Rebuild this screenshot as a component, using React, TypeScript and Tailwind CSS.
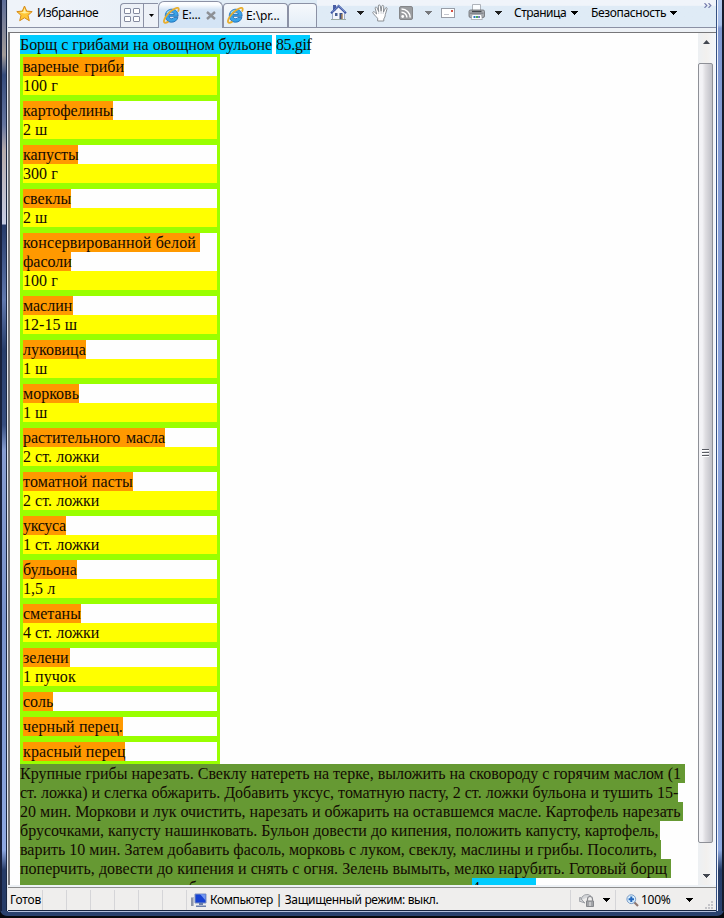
import type { ReactNode } from 'react';

type Ingredient = { lines: { text: string; box: string }[]; amount?: string };

const ingredients: Ingredient[] = [
  { lines: [{ text: 'вареные гриби', box: 'w-[101px]' }], amount: '100 г' },
  { lines: [{ text: 'картофелины', box: 'w-[90px]' }], amount: '2 ш' },
  { lines: [{ text: 'капусты', box: 'w-[55px]' }], amount: '300 г' },
  { lines: [{ text: 'свеклы', box: 'w-[48px]' }], amount: '2 ш' },
  {
    lines: [
      { text: 'консервированной белой', box: 'w-[177px] pr-1 tracking-[0.15px]' },
      { text: 'фасоли', box: 'w-[48px]' },
    ],
    amount: '100 г',
  },
  { lines: [{ text: 'маслин', box: 'w-[50px]' }], amount: '12-15 ш' },
  { lines: [{ text: 'луковица', box: 'w-[63px]' }], amount: '1 ш' },
  { lines: [{ text: 'морковь', box: 'w-[56px]' }], amount: '1 ш' },
  { lines: [{ text: 'растительного масла', box: 'w-[142px] tracking-[-0.05px]' }], amount: '2 ст. ложки' },
  { lines: [{ text: 'томатной пасты', box: 'w-[110px] tracking-[0.15px]' }], amount: '2 ст. ложки' },
  { lines: [{ text: 'уксуса', box: 'w-[43px] tracking-[-0.3px]' }], amount: '1 ст. ложки' },
  { lines: [{ text: 'бульона', box: 'w-[54px]' }], amount: '1,5 л' },
  { lines: [{ text: 'сметаны', box: 'w-[58px]' }], amount: '4 ст. ложки' },
  { lines: [{ text: 'зелени', box: 'w-[47px]' }], amount: '1 пучок' },
  { lines: [{ text: 'соль', box: 'w-[30px]' }] },
  { lines: [{ text: 'черный перец.', box: 'w-[100px] tracking-[0.12px]' }] },
  { lines: [{ text: 'красный перец', box: 'w-[102px] tracking-[0.12px]' }] },
];

const steps = [
  { text: 'Крупные грибы нарезать. Свеклу натереть на терке, выложить на сковороду с горячим маслом (1', box: 'w-[665px] pr-[4px]' },
  { text: 'ст. ложка) и слегка обжарить. Добавить уксус, томатную пасту, 2 ст. ложки бульона и тушить 15-', box: 'w-[658px]' },
  { text: '20 мин. Моркови и лук очистить, нарезать и обжарить на оставшемся масле. Картофель нарезать', box: 'w-[663px] pr-[4px]' },
  { text: 'брусочками, капусту нашинковать. Бульон довести до кипения, положить капусту, картофель,', box: 'w-[640px] pr-[4px]' },
  { text: 'варить 10 мин. Затем добавить фасоль, морковь с луком, свеклу, маслины и грибы. Посолить,', box: 'w-[641px] pr-[4px]' },
  { text: 'поперчить, довести до кипения и снять с огня. Зелень вымыть, мелко нарубить. Готовый борщ', box: 'w-[651px] pr-[4px]' },
];

function Caret({ className = '' }: { className?: string }) {
  return (
    <svg className={`shrink-0 ${className}`} width="7" height="4" viewBox="0 0 7 4" shapeRendering="crispEdges">
      <path d="M0 0h7L3.5 4z" fill="currentColor" />
    </svg>
  );
}

function ExplorerIcon() {
  return (
    <svg width="17" height="17" viewBox="0 0 17 17" className="shrink-0">
      <path d="M14.900 10.400h-4c-.5.900-1.200 1.300-2.200 1.300-1.500 0-2.500-.9-2.600-2.400h9C15.300 5 12.700 2.200 8.900 2.200 5.100 2.200 2.300 5 2.300 8.700c0 3.900 2.700 6.500 6.300 6.500 3.200 0 5.400-1.800 6.300-4.800zM6.100 7.300c.2-1.300 1.200-2.100 2.600-2.100s2.400.8 2.500 2.100z" fill="#3aa3e6" stroke="#1766ae" strokeWidth=".8" />
      <path d="M4 6.300C4.600 4.500 6.700 3.500 9 3.500" fill="none" stroke="#a5e2fa" strokeWidth="1.200" />
      <path d="M15 4.600C16.700 1 15.200-.3 11.100 2 6.300 4.600 1.600 10.100 1 13.700c-.4 2.600 1.400 2.600 4.500.9" fill="none" stroke="#e8ae2d" strokeWidth="1.800" />
    </svg>
  );
}

function HomeIcon() {
  return (
    <svg width="17" height="17" viewBox="0 0 17 17" className="shrink-0">
      <path d="M2.500 8v7.500h12V8l-6-5z" fill="#f3f5fb" stroke="#8b99bb" strokeWidth=".8" />
      <path d="M3 1h3v5L3 8z" fill="#4a5da4" />
      <path d="M1 9.200 8.600 2 16 9.200" fill="none" stroke="#3d55a5" strokeWidth="2" />
      <path d="M2 8.200 8.600 1.700 15 8" fill="none" stroke="#94abd9" strokeWidth=".7" />
      <path d="M5 9h2.500v3H5z" fill="#465d91" />
      <path d="M9.500 9h3v6.500h-3z" fill="#3c5186" />
      <path d="M11.500 10h1v5h-1z" fill="#d89b45" />
      <path d="M1 15.500h15" stroke="#9aa9a2" />
    </svg>
  );
}

function HandIcon() {
  return (
    <svg width="18" height="18" viewBox="0 0 18 18" className="shrink-0">
      <path d="M5.600 14.300C3.500 12 1.500 10 .8 8.800c-.4-.9.800-1.500 1.600-.8l2.300 2L3.200 4.200c-.2-1.300 1.300-1.600 1.800-.5l1.700 4L6.300 2c0-1.400 1.700-1.500 2-.1l.8 5.400.7-5.100c.3-1.300 1.900-1.100 1.900.3l-.2 5.600 1.900-4c.6-1.100 2-.6 1.600.8l-1.700 5.600c-.1 2-.7 3.300-1.500 4.400v2.100H5.700z" fill="#fff" stroke="#7f8389" strokeWidth=".9" />
      <path d="M6.700 8v2M9.100 7.500v2.300M11.400 8l-.3 2" stroke="#b3b8c0" strokeWidth=".7" />
    </svg>
  );
}

function FeedIcon() {
  return (
    <svg width="14" height="14" viewBox="0 0 14 14" className="shrink-0">
      <rect x=".5" y=".5" width="13" height="13" rx="1.500" fill="#9b9da0" stroke="#85878a" />
      <circle cx="3.700" cy="10.500" r="1.400" fill="#fff" />
      <path d="M2.500 6.200a5.400 5.400 0 0 1 5.400 5.400M2.500 2.900a8.700 8.700 0 0 1 8.700 8.700" fill="none" stroke="#fff" strokeWidth="1.500" />
    </svg>
  );
}

function PrinterIcon() {
  return (
    <svg width="17" height="17" viewBox="0 0 17 17" className="shrink-0">
      <path d="M4.500.5h8V7h-8z" fill="#fbfdff" stroke="#aeb3ba" />
      <rect x="1" y="6" width="15.500" height="7.500" rx="1.500" fill="#a9acb0" stroke="#686b70" strokeWidth=".8" />
      <path d="M4 7.500h9.500" stroke="#45484d" strokeWidth="1.300" />
      <path d="M2 9.200h13.500" stroke="#75787d" />
      <path d="M4 10.500h9.500l.8 5H3.200z" fill="#fff" stroke="#9499a0" strokeWidth=".7" />
      <path d="M5.500 12h2v2h-2z" fill="#2772c2" /><path d="M8 12h2v2H8z" fill="#47a95a" /><path d="M10.300 12h1.500v2h-1.500z" fill="#4559ad" />
    </svg>
  );
}

function Toolbar() {
  return (
    <header className="flex h-7 shrink-0 border-b border-[#8b91a5] bg-linear-to-r from-[#eff3f9] from-5% to-[#deebf6] to-40% text-[12px] leading-4 text-black">
      <div className="flex w-28 items-center pb-px pl-2">
        <svg width="17" height="17" viewBox="0 0 17 17" className="shrink-0">
          <path d="m8.500 1 2.200 5.100 5.500.5-4.200 3.700 1.300 5.400-4.800-2.900-4.800 2.900L5 10.300.8 6.600l5.500-.5z" fill="#ffc636" stroke="#d78b18" />
          <path d="m8.500 3 1.300 4 4 .5-5.300 1-5-1L7.200 7z" fill="#fff0a1" />
        </svg>
        <span className="ml-1 whitespace-nowrap tracking-[-0.35px]">Избранное</span>
      </div>
      <div className="mt-[3px] flex h-6 w-[38px] rounded-tl-sm border-l border-t border-[#8b91a5] bg-[#edf1f7]">
        <div className="flex w-[23px] items-center justify-center border-r border-[#8b91a5] pb-px">
          <div className="grid grid-cols-2 gap-[2px]">
            <i className="h-[6px] w-[7px] rounded-[1px] border border-[#858ba0] bg-white" />
            <i className="h-[6px] w-[7px] rounded-[1px] border border-[#858ba0] bg-white" />
            <i className="h-[6px] w-[7px] rounded-[1px] border border-[#858ba0] bg-white" />
            <i className="h-[6px] w-[7px] rounded-[1px] border border-[#858ba0] bg-white" />
          </div>
        </div>
        <div className="flex flex-1 items-center justify-center pb-px">
          <svg width="5" height="3" viewBox="0 0 5 3" className="shrink-0"><path d="M0 0h5L2.500 3z" /></svg>
        </div>
      </div>
      <div className="mt-px flex h-[27px] w-[65px] items-center rounded-t-md border border-b-0 border-[#8b91a5] bg-linear-to-b from-[#fbfdff] from-10% to-[#d4e4f5] to-30% pl-1">
        <ExplorerIcon />
        <span className="ml-[2px] w-[19px] tracking-[-0.2px]">E:...</span>
        <svg width="10" height="9" viewBox="0 0 10 9" className="ml-[5px]"><path d="m1 1 8 7M9 1 1 8" stroke="#8d9095" strokeWidth="2.400" /></svg>
      </div>
      <div className="mt-[3px] flex h-6 w-[65px] items-center rounded-t-sm border border-b-0 border-[#8b91a5] bg-linear-to-b from-[#f6f9fc] to-[#e3edf7] pl-[3px]">
        <ExplorerIcon />
        <span className="ml-[2px] whitespace-nowrap tracking-[-0.1px]">E:\pr...</span>
      </div>
      <div className="mt-[3px] h-6 w-[29px] rounded-t-sm border border-b-0 border-[#8b91a5] bg-linear-to-b from-[#f6f9fc] to-[#e3edf7]" />
      <div className="flex flex-1 items-center bg-linear-to-b from-[#f0f4fa] from-20% to-[#dfebf6] to-22% pb-[2px] pl-[13px]">
        <HomeIcon /><Caret className="ml-[10px] text-[#202020]" />
        <span className="ml-[8px] flex"><HandIcon /></span>
        <span className="ml-[9px] flex"><FeedIcon /></span><Caret className="ml-[12px] text-[#77797d]" />
        <svg width="14" height="10" viewBox="0 0 14 10" className="ml-[9px] shrink-0"><rect x=".5" y=".5" width="13" height="9" fill="#fff" stroke="#989da7" /><path d="M10 2h2v2h-2z" fill="#d65144" /><path d="M3 6.500h5" stroke="#c3c6ce" /></svg>
        <span className="ml-[13px] flex"><PrinterIcon /></span><Caret className="ml-[10px] text-[#202020]" />
        <span className="ml-[12px] w-[53px] whitespace-nowrap tracking-[-0.5px]">Страница</span><Caret className="ml-1" />
        <span className="ml-[13px] w-[75px] whitespace-nowrap tracking-[-0.35px]">Безопасность</span><Caret className="ml-1" />
        <svg width="8" height="5" viewBox="0 0 8 5" className="mb-[15px] ml-[27px] shrink-0"><path d="m.5.200 2.300 2.300L.5 4.800M4.500.200l2.300 2.300-2.300 2.300" fill="none" stroke="#747bab" strokeWidth="1.200" /></svg>
      </div>
    </header>
  );
}

function Mark({ box, children, color }: { box: string; children: ReactNode; color: string }) {
  return <div className={`h-[19px] whitespace-nowrap text-justify [text-align-last:justify] ${box} ${color}`}>{children}</div>;
}

function RecipePage() {
  return (
    <main className="h-[852px] w-[688px] overflow-hidden bg-[#fefefe] pl-[10px] pt-[2px] font-['Liberation_Serif','Times_New_Roman',serif] text-[16px] leading-[19px] text-[#130b02]">
      <div className="flex gap-1">
        <Mark box="w-[252px] tracking-[-0.04px]" color="bg-[#00ccff]">Борщ с грибами на овощном бульоне</Mark>
        <Mark box="w-[34px] tracking-[-0.4px]" color="bg-[#00ccff]">85.gif</Mark>
      </div>
      <ul className="w-[200px]">
        {ingredients.map((item) => (
          <li key={item.lines[0].text} className="border-[3px] border-[#99ff00] bg-[#fefefe]">
            {item.lines.map((line) => (
              <Mark key={line.text} box={line.box} color="bg-[#ff9900]">{line.text}</Mark>
            ))}
            {item.amount && <div className="h-[19px] bg-[#ffff00] tracking-[0.05px]">{item.amount}</div>}
          </li>
        ))}
      </ul>
      {steps.map((line) => (
        <Mark key={line.text} box={line.box} color="bg-[#669933]">{line.text}</Mark>
      ))}
      <div className="flex h-[19px] whitespace-nowrap">
        <span className="w-[452px] bg-[#669933] pl-[20px]">посыпать зеленью, добавить сметану.</span>
        <span className="w-16 bg-[#00ccff]">4 порции</span>
      </div>
    </main>
  );
}

function Scrollbar() {
  return (
    <div className="flex h-[852px] w-[18px] flex-col border-r border-[#f5f8fc] bg-linear-to-r from-[#edf0f3] via-[#f2f0ee] to-[#f3f6fa]">
      <div className="flex h-[30px] w-full items-center pb-3 pl-[5px]">
        <svg width="7" height="4" viewBox="0 0 7 4"><path d="m0 4 3.500-4L7 4z" fill="#424750" /></svg>
      </div>
      <div className="flex h-[780px] w-[15px] items-center rounded-[2px] border border-[#8e9097] bg-linear-to-r from-[#f3f3f6] from-25% via-[#dedde1] via-50% to-[#bfc0c7] pl-[3px]">
        <div className="flex flex-col gap-px">
          <i className="h-[2px] w-[7px] border-t border-[#595c63] bg-white" />
          <i className="h-[2px] w-[7px] border-t border-[#595c63] bg-white" />
          <i className="h-[2px] w-[7px] border-t border-[#595c63] bg-white" />
        </div>
      </div>
      <Caret className="ml-[5px] mt-[31px] text-[#424750]" />
    </div>
  );
}

function StatusBar() {
  return (
    <footer className="flex h-[23px] shrink-0 border-t border-[#8d8d8d] bg-[#efeeed] pt-[2px] text-[12px] leading-[20px] text-black">
      <div className="flex h-5 w-[34px] pl-[2px] tracking-[-0.2px]">Готов</div>
      {[0, 1, 2, 3, 4, 5].map((n) => <i key={n} className="h-5 w-6 border-l border-[#d5d5d8]" />)}
      <div className="flex h-5 flex-1 items-center border-l border-[#d5d5d8] pl-[4px]">
        <svg width="16" height="15" viewBox="0 0 16 15" className="shrink-0">
          <path d="M0 4h3v9H0z" fill="#b8bdc9" /><path d="M1 5v8" stroke="#667087" />
          <path d="M4 1h11v9H4z" fill="#1742d2" stroke="#7e91bd" /><path d="m9 1 5.500.5v6z" fill="#7397ef" />
          <path d="M8 10h4v2H8zM5 12.500h10v1.500H5z" fill="#697da9" />
        </svg>
        <span className="ml-[3px] whitespace-nowrap tracking-[-0.36px]">Компьютер | Защищенный режим: выкл.</span>
      </div>
      <div className="flex h-5 w-[45px] items-center border-l border-[#d5d5d8] pl-2">
        <svg width="16" height="16" viewBox="0 0 16 16" className="shrink-0">
          <path d="M2 8a6 6 0 0 1 10-4M3 8l3 3-6-2 1-4z" fill="#d4d6d9" stroke="#a0a3a8" />
          <path d="M8.500 9V7a2.500 2.500 0 0 1 5 0v2" fill="none" stroke="#898b90" strokeWidth="1.200" /><path d="M7.500 9h7v5.500h-7z" fill="#a2a4a8" stroke="#85878b" />
          <path d="M10 11h2M10 13h2" stroke="#eee" />
        </svg>
        <Caret className="ml-2" />
      </div>
      <div className="flex h-5 w-[101px] items-center border-l border-[#d5d5d8] pl-[10px]">
        <svg width="13" height="13" viewBox="0 0 13 13" className="shrink-0">
          <path d="m8 8 4 4" stroke="#8e7770" strokeWidth="2.200" /><circle cx="5.300" cy="5.200" r="4.400" fill="#d9effd" stroke="#7799c4" /><path d="M5.300 2.500v5.400M2.600 5.200H8" stroke="#2467bd" strokeWidth="2" />
        </svg>
        <span className="ml-[2px] w-[31px] tracking-[-0.3px]">100%</span>
        <Caret className="ml-[14px]" />
        <svg width="9" height="9" viewBox="0 0 9 9" className="ml-3 mt-[11px] shrink-0"><path d="M6 0h2v2H6zM3 3h2v2H3zM6 3h2v2H6zM0 6h2v2H0zM3 6h2v2H3zM6 6h2v2H6z" fill="#c4c4c8" /></svg>
      </div>
    </footer>
  );
}

export default function App() {
  return (
    <div className="h-[918px] w-[724px] overflow-hidden bg-[#07080c] font-['Noto_Sans','Open_Sans',sans-serif]">
      <div className="flex h-[917px] w-[724px] flex-col overflow-hidden rounded-b-[7px] border-b border-[#07080c] bg-[#2a416d]">
        <div className="flex h-[911px] w-[724px] shrink-0">
          <div className="w-[2px] bg-[#17203c]" />
          <div className="w-1 bg-[linear-gradient(to_bottom,#5d6d98_0px,#a29b98_55px,#354b7b_75px,#65759f_125px,#b4aaaa_150px,#c6cce3_224px,#263b69_225px,#6078ad_300px,#283e6b_350px,#374e80_425px,#869cd0_450px,#7892cb_620px,#8ea8e1_850px,#263b67_870px,#263c68_911px)]" />
          <div className="w-px bg-[#192641]" />
          <div className="w-px bg-[#e5e8ef]" />
          <div className="flex h-[911px] w-[708px] flex-col bg-[#192641]">
            <Toolbar />
            <div className="h-1 shrink-0 bg-[#edf1f6]" />
            <section className="flex h-[853px] shrink-0 border-l-2 border-t border-[#77777a]">
              <RecipePage />
              <Scrollbar />
            </section>
            <div className="h-[2px] shrink-0 bg-[#edf1f5]" />
            <StatusBar />
          </div>
          <div className="w-px bg-[#345083]" />
          <div className="w-px bg-[#f1f4fc]" />
          <div className="w-[4px] bg-[linear-gradient(to_bottom,#b2c9ed_0px,#a7bee8_25px,#8098d0_28px,#8ea7df_450px,#8199ce_600px,#8ea9df_850px,#263d69_870px,#2a416d_911px)]" />
          <div className="w-[2px] bg-[#151b2b]" />
        </div>
        <div className="mx-2 h-px shrink-0 bg-[#b3bfdc]" />
      </div>
    </div>
  );
}
